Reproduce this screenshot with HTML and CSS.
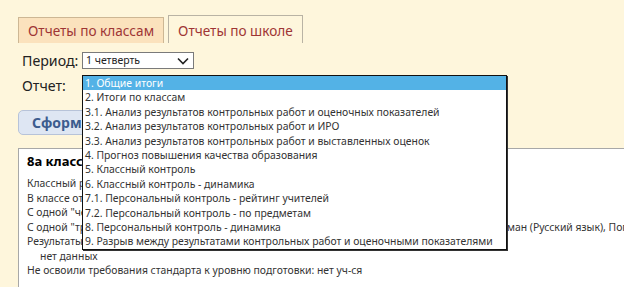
FILE: index.html
```html
<!DOCTYPE html>
<html lang="ru">
<head>
    <meta charset="UTF-8">
    <title>Отчеты по школе</title>
    <link rel="stylesheet" href="styles.css">
</head>
<body>
    <div class="tabs">
        <div class="tab">Отчеты по классам</div>
        <div class="tab active">Отчеты по школе</div>
    </div>
    <div class="form">
        <div class="row">
            <span class="label">Период:</span>
            <div class="select">1 четверть<svg class="caret" width="12" height="8" viewBox="0 0 12 8"><path d="M1 1.5l5 5 5-5" fill="none" stroke="#222" stroke-width="1.6"/></svg></div>
        </div>
        <div class="row">
            <span class="label">Отчет:</span>
            <div class="picker">
                <ul class="listbox">
                    <li class="sel">1. Общие итоги</li>
                    <li>2. Итоги по классам</li>
                    <li>3.1. Анализ результатов контрольных работ и оценочных показателей</li>
                    <li>3.2. Анализ результатов контрольных работ и ИРО</li>
                    <li>3.3. Анализ результатов контрольных работ и выставленных оценок</li>
                    <li>4. Прогноз повышения качества образования</li>
                    <li>5. Классный контроль</li>
                    <li>6. Классный контроль - динамика</li>
                    <li>7.1. Персональный контроль - рейтинг учителей</li>
                    <li>7.2. Персональный контроль - по предметам</li>
                    <li>8. Персональный контроль - динамика</li>
                    <li>9. Разрыв между результатами контрольных работ и оценочными показателями</li>
                </ul>
            </div>
        </div>
        <button class="build">Сформировать</button>
    </div>
    <div class="report">
        <div class="title">8а класс</div>
        <p>Классный руководитель: Смирнова Ольга Петровна</p>
        <p>В классе отличников: 3, хорошистов: 11, неуспевающих: 0</p>
        <p>С одной "четверкой": Кузнецова Дарья (Алгебра)</p>
        <p><span class="cut">С одной "тройкой": Васильев Андрей (Геометрия), Орлова Ксения (Литература), Гер</span>ман (Русский язык), Попова Мария (Алгебра)</p>
        <p>Результаты контрольных работ:</p>
        <p class="indent">нет данных</p>
        <p>Не освоили требования стандарта к уровню подготовки: нет уч-ся</p>
    </div>
</body>
</html>
```

FILE: styles.css
```css
body{margin:0;height:287px;background:#fef6dc;font-family:"Noto Sans",sans-serif;color:#222;overflow:hidden}
.tabs{display:flex;align-items:flex-end;gap:4px;padding:15px 0 0 18px;height:28px}
.tab{height:25px;line-height:25px;padding:0 9px;font-size:13.6px;color:#9e3535;background:#fbe2bd;border:1px solid #cdb794;border-bottom:none}
.tab.active{height:27px;line-height:29px;background:#fef6dc;border-color:#b9b3a4}
.form{padding:6px 0 0 22px}
.row{display:flex;align-items:center;height:22px}
.row + .row{margin-top:3px}
.label{width:60px;font-size:14.2px}
.select{position:relative;width:104px;height:15px;padding:0 3px;background:#fff;border:1px solid #7a7a7a;font-size:10.5px;line-height:15px}
.caret{position:absolute;right:4px;top:4px}
.picker{position:relative;width:420px;height:18px}
.listbox{position:absolute;left:0;top:-1px;margin:0;padding:0;list-style:none;width:423px;background:#fff;border:1px solid #111;box-shadow:1px 1px 0 #333;z-index:10}
.listbox li{height:14.4px;line-height:14.4px;padding:0 2px;font-size:10.4px;color:#333;white-space:nowrap}
.listbox li.sel{background:#53b2e6;color:#fff}
.build{margin:14px 0 0 -4px;height:25px;padding:0 13px;font:bold 14px "Noto Sans",sans-serif;color:#3c5c8e;background:#dee6f3;border:1px solid #b7c3d9;border-radius:5px}
.report{margin:13px 0 0 18px;height:136px;overflow:hidden;background:#fff;border-top:1px solid #a8a8a8;border-left:1px solid #a8a8a8;padding:3px 0 0 8px;font-size:10.4px;color:#333}
.title{font-weight:bold;font-size:13px;color:#000;margin-bottom:6px}
.report p{margin:0;line-height:14.5px;white-space:nowrap}
.report p.indent{padding-left:13px}
.cut{display:inline-block;width:480px;overflow:hidden;vertical-align:top}
```
